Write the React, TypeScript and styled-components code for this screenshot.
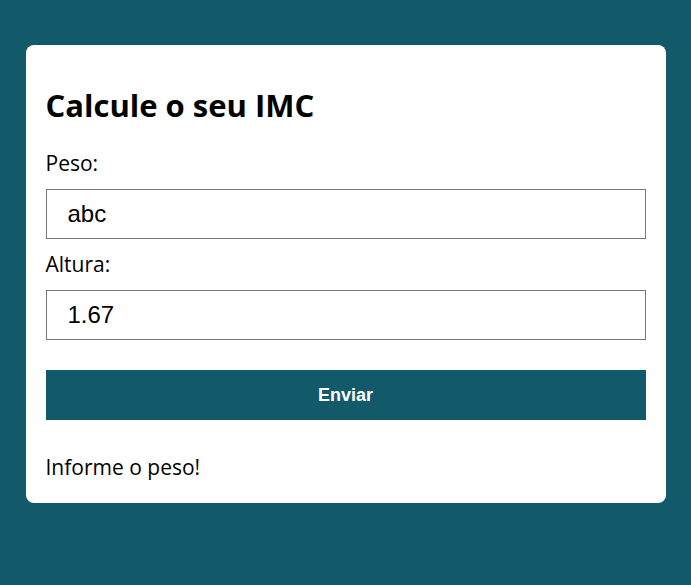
import React, { useState } from 'react';
import styled, { createGlobalStyle } from 'styled-components';

const TEAL = '#12596a';

const GlobalStyle = createGlobalStyle`
  html, body {
    margin: 0;
    padding: 0;
    background-color: ${TEAL};
  }
  body {
    font-family: 'Open Sans', 'Noto Sans', sans-serif;
    min-height: 100vh;
  }
  * {
    box-sizing: border-box;
  }
`;

const App: React.FC = () => {
  const [peso, setPeso] = useState('abc');
  const [altura, setAltura] = useState('1.67');
  const [mensagem, setMensagem] = useState('Informe o peso!');

  const handleSubmit = (e: React.FormEvent) => {
    e.preventDefault();
    const p = parseFloat(peso);
    const a = parseFloat(altura);
    if (isNaN(p)) {
      setMensagem('Informe o peso!');
      return;
    }
    if (isNaN(a)) {
      setMensagem('Informe a altura!');
      return;
    }
    setMensagem(`Seu IMC é ${(p / (a * a)).toFixed(2)}`);
  };

  return (
    <>
      <GlobalStyle />
      <Page>
        <Card onSubmit={handleSubmit}>
          <Title>Calcule o seu IMC</Title>
          <Label htmlFor="peso">Peso:</Label>
          <Input id="peso" value={peso} onChange={(e) => setPeso(e.target.value)} />
          <Label htmlFor="altura">Altura:</Label>
          <Input id="altura" value={altura} onChange={(e) => setAltura(e.target.value)} />
          <Button type="submit">Enviar</Button>
          <Result>{mensagem}</Result>
        </Card>
      </Page>
    </>
  );
};

const Page = styled.main`
  padding: 45px 0;
  display: flex;
  justify-content: center;
`;

const Card = styled.form`
  width: 640px;
  background: #ffffff;
  border-radius: 8px;
  padding: 20px 20px 22px;
  display: flex;
  flex-direction: column;
`;

const Title = styled.h1`
  margin: 20px 0 24px;
  font-size: 31px;
  line-height: 41px;
  font-weight: 700;
  color: #000;
`;

const Label = styled.label`
  display: block;
  font-size: 21px;
  line-height: 27px;
  color: #000;
  margin-bottom: 12px;
`;

const Input = styled.input`
  width: 100%;
  height: 50px;
  margin: 0 0 12px;
  padding: 0 21px;
  border: 1px solid #767676;
  border-radius: 0;
  font-family: 'Liberation Sans', Arial, sans-serif;
  font-size: 24px;
  color: #000;
  outline: none;
`;

const Button = styled.button`
  margin-top: 18px;
  height: 50px;
  width: 100%;
  border: none;
  background: ${TEAL};
  color: #fff;
  font-family: 'Liberation Sans', Arial, sans-serif;
  font-size: 18px;
  font-weight: 700;
  cursor: pointer;
`;

const Result = styled.p`
  margin: 34px 0 0;
  font-size: 21px;
  line-height: 27px;
  color: #000;
`;

export default App;
